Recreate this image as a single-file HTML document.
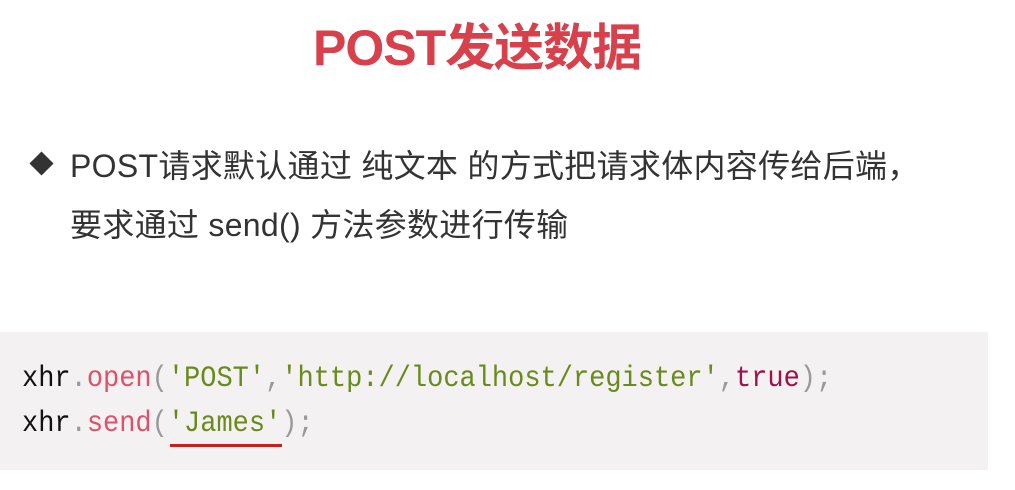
<!DOCTYPE html>
<html><head><meta charset="utf-8"><style>
html,body{margin:0;padding:0;background:#fff;width:1015px;height:490px;overflow:hidden;position:relative}
.t{position:absolute;left:313px;top:8px;font:bold 50px "Liberation Sans","Noto Sans CJK SC",sans-serif;color:#d8404b;letter-spacing:-1px;white-space:nowrap}
.p{position:absolute;left:70px;font:32px "Liberation Sans","Noto Sans CJK SC",sans-serif;color:#333;white-space:nowrap;letter-spacing:0.3px}
.d{position:absolute;left:33px;top:155px;width:17px;height:17px;background:#333;transform:rotate(45deg)}
.code{position:absolute;left:0;top:332px;width:988px;height:138px;background:#f3f1f1}
.c{position:absolute;left:22px;font:30px "Liberation Mono",monospace;color:#111;white-space:pre;transform:scaleX(0.9);transform-origin:0 0}
.f{color:#e0506a}.s{color:#6a8a1c}.k{color:#a0104a}.g{color:#999}
.u{position:absolute;left:170px;top:444px;width:112px;height:3px;background:#c8201c}
</style></head><body>
<div class="t">POST发送数据</div>
<div class="d"></div>
<div class="p" style="top:141px">POST请求默认通过 纯文本 的方式把请求体内容传给后端，</div>
<div class="p" style="top:200px">要求通过 send() 方法参数进行传输</div>
<div class="code"></div>
<div class="c" style="top:362px">xhr<span class="g">.</span><span class="f">open</span><span class="g">(</span><span class="s">'POST'</span><span class="g">,</span><span class="s">'http://localhost/register'</span><span class="g">,</span><span class="k">true</span><span class="g">);</span></div>
<div class="c" style="top:407px">xhr<span class="g">.</span><span class="f">send</span><span class="g">(</span><span class="s">'James'</span><span class="g">);</span></div>
<div class="u"></div>
</body></html>
